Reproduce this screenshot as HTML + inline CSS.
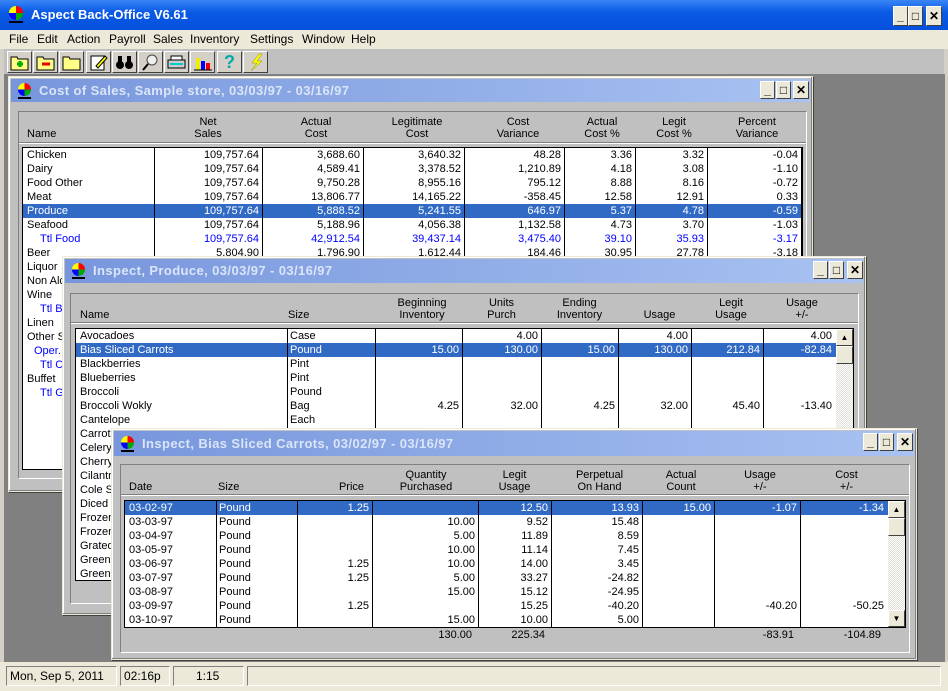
<!DOCTYPE html>
<html><head><meta charset="utf-8"><style>
*{margin:0;padding:0;box-sizing:border-box}
body{width:948px;height:691px;overflow:hidden;background:#d4d0c8;font-family:"Liberation Sans",sans-serif;font-size:11px;color:#000;position:relative}
.abs{position:absolute}
.mt{left:0;top:0;width:948px;height:30px;background:linear-gradient(#3a86f5,#0a5ae6 40%,#0550dc);color:#fff;font-weight:bold;font-size:13px}
.menu{left:0;top:30px;width:948px;height:19px;background:#ece9d8;font-size:12px}
.menu span{position:absolute;top:2px}
.tb{left:4px;top:49px;width:940px;height:25px;background:#c0c0c0}
.tbtn{position:absolute;top:2px;width:25px;height:22px;background:#d4d0c8;border:1px solid;border-color:#fff #404040 #404040 #fff}
.mdi{left:4px;top:74px;width:941px;height:588px;background:#808080}
.cb{position:absolute;width:15px;height:18px;background:#ece9d8;border:1px solid;border-color:#fff #404040 #404040 #fff;font-weight:bold;font-size:12px;text-align:center;line-height:16px;color:#000}
.win{position:absolute;background:#c0c0c0;border:1px solid #ece9d8;box-shadow:inset -1px -1px #808080,inset 1px 1px #fff,1px 1px 0 #404040}
.tt{position:absolute;left:2px;top:2px;height:23px;background:linear-gradient(90deg,#7896dc,#a8c2f2);color:#dbe5f8;font-weight:bold;font-size:13px;letter-spacing:.4px;line-height:23px}
.panel{position:absolute;border:1px solid;border-color:#808080 #fff #fff #808080;background:#c0c0c0}
.hl{position:absolute;height:2px;border-top:1px solid #808080;border-bottom:1px solid #fff}
.hd{position:absolute;font-size:11px;line-height:12px;text-align:center}
.grid{position:absolute;border:1px solid #000;background:#fff;overflow:hidden}
.grid table{border-collapse:collapse;table-layout:fixed;position:relative;z-index:1}
.grid td{height:14px;line-height:14px;white-space:nowrap;overflow:hidden;padding:0 4px;text-align:right}
.grid td.l{text-align:left}
.vl{position:absolute;top:0;bottom:0;width:1px;background:#000;z-index:2}
tr.s td{background:#316ac5;color:#fff}
.b{color:#0000ff}
.sb{position:absolute;top:0;right:0;width:17px;bottom:0;background:repeating-conic-gradient(#fff 0 25%,#e0ded6 0 50%) 0 0/2px 2px;z-index:3}
.sbb{position:absolute;left:0;width:17px;height:17px;background:#ece9d8;border:1px solid;border-color:#fff #404040 #404040 #fff;font-size:8px;text-align:center;line-height:15px}
.st{left:0;top:662px;width:948px;height:29px;background:#ece9d8}
.sp{position:absolute;top:4px;height:20px;border:1px solid;border-color:#808080 #fff #fff #808080;font-size:12px;line-height:18px;padding-left:3px}
</style></head><body>

<div class="abs mt"><div class="abs" style="left:9px;top:6px;width:14px;height:14px;border-radius:7px;background:conic-gradient(#f00 0 25%,#0a0 0 50%,#00f 0 75%,#ff0 0)"></div><div class="abs" style="left:9px;top:21px;width:14px;height:2px;background:#000"></div><span class="abs" style="left:31px;top:7px">Aspect Back-Office V6.61</span>
<div class="cb" style="left:893px;top:6px;width:15px;height:20px;line-height:18px">_</div><div class="cb" style="left:908px;top:6px;width:15px;height:20px;line-height:18px">□</div><div class="cb" style="left:926px;top:6px;width:16px;height:20px;line-height:18px">✕</div></div>

<div class="abs menu"><span style="left:9px">File</span><span style="left:37px">Edit</span><span style="left:67px">Action</span><span style="left:109px">Payroll</span><span style="left:153px">Sales</span><span style="left:190px">Inventory</span><span style="left:250px">Settings</span><span style="left:302px">Window</span><span style="left:351px">Help</span></div>

<div class="abs tb">
<div class="tbtn" style="left:3px"><svg width="23" height="20"><path d="M3 5h6l1 2h10v11H3z" fill="#ff8" stroke="#000"/><path d="M9 12h6M12 9v6" stroke="#0a0" stroke-width="3"/></svg></div>
<div class="tbtn" style="left:29px"><svg width="23" height="20"><path d="M3 5h6l1 2h10v11H3z" fill="#ff8" stroke="#000"/><path d="M8 12h8" stroke="#e00" stroke-width="3"/></svg></div>
<div class="tbtn" style="left:55px"><svg width="23" height="20"><path d="M3 5h6l1 2h10v11H3z" fill="#ff8" stroke="#000"/></svg></div>
<div class="tbtn" style="left:82px"><svg width="23" height="20"><rect x="4" y="4" width="13" height="14" fill="#fff" stroke="#000"/><path d="M9 14l9-10 2 2-9 10z" fill="#ff0" stroke="#000"/></svg></div>
<div class="tbtn" style="left:108px"><svg width="23" height="20"><circle cx="7" cy="13" r="4" fill="#000"/><circle cx="16" cy="13" r="4" fill="#000"/><rect x="5" y="4" width="4" height="8" fill="#000"/><rect x="14" y="4" width="4" height="8" fill="#000"/></svg></div>
<div class="tbtn" style="left:134px"><svg width="23" height="20"><circle cx="13" cy="8" r="5" fill="#eee" stroke="#444"/><path d="M9 12l-5 6" stroke="#000" stroke-width="2"/></svg></div>
<div class="tbtn" style="left:160px"><svg width="23" height="20"><rect x="3" y="8" width="17" height="8" fill="#ccc" stroke="#000"/><rect x="6" y="4" width="11" height="4" fill="#fff" stroke="#000"/><rect x="5" y="11" width="13" height="2" fill="#0cc"/></svg></div>
<div class="tbtn" style="left:186px"><svg width="23" height="20"><rect x="5" y="6" width="4" height="12" fill="#ee0"/><rect x="10" y="9" width="4" height="9" fill="#00f"/><rect x="15" y="11" width="4" height="7" fill="#e00"/><path d="M3 18h18" stroke="#000"/></svg></div>
<div class="tbtn" style="left:213px;font:bold 18px 'Liberation Sans';color:#0aa;text-align:center;line-height:20px">?</div>
<div class="tbtn" style="left:239px"><svg width="23" height="20"><path d="M15 2l-7 9h5l-6 8 11-10h-5l5-7z" fill="#ff0" stroke="#880" stroke-width=".5"/></svg></div>
</div>

<div class="abs mdi"></div>

<!-- Window 1 -->
<div class="win" style="left:8px;top:76px;width:805px;height:416px;z-index:1">
<div class="tt" style="width:799px"><div class="abs" style="left:7px;top:4px;width:13px;height:13px;border-radius:7px;background:conic-gradient(#f00 0 25%,#0a0 0 50%,#00f 0 75%,#ff0 0)"></div><div class="abs" style="left:7px;top:18px;width:13px;height:2px;background:#000"></div><span class="abs" style="left:28px">Cost of Sales, Sample store, 03/03/97 - 03/16/97</span></div>
<div class="cb" style="left:751px;top:4px">_</div><div class="cb" style="left:767px;top:4px">□</div><div class="cb" style="left:784px;top:4px;width:16px">✕</div>
<div class="panel" style="left:9px;top:34px;width:789px;height:368px"></div>
<div class="hl" style="left:10px;top:65px;width:787px"></div>
<div class="hd" style="left:18px;top:51px;text-align:left">Name</div>
<div class="hd" style="left:145px;top:39px;width:108px">Net<br>Sales</div>
<div class="hd" style="left:253px;top:39px;width:108px">Actual<br>Cost</div>
<div class="hd" style="left:354px;top:39px;width:108px">Legitimate<br>Cost</div>
<div class="hd" style="left:455px;top:39px;width:108px">Cost<br>Variance</div>
<div class="hd" style="left:555px;top:39px;width:76px">Actual<br>Cost %</div>
<div class="hd" style="left:626px;top:39px;width:78px">Legit<br>Cost %</div>
<div class="hd" style="left:698px;top:39px;width:100px">Percent<br>Variance</div>
<div class="grid" style="left:13px;top:70px;width:781px;height:323px">
<div class="vl" style="left:131px"></div><div class="vl" style="left:239px"></div><div class="vl" style="left:340px"></div><div class="vl" style="left:441px"></div><div class="vl" style="left:541px"></div><div class="vl" style="left:612px"></div><div class="vl" style="left:684px"></div><div class="vl" style="left:778px"></div>
<table style="width:779px"><colgroup><col style="width:132px"><col style="width:108px"><col style="width:101px"><col style="width:101px"><col style="width:100px"><col style="width:71px"><col style="width:72px"><col style="width:94px"></colgroup>
<tr><td class="l">Chicken</td><td>109,757.64</td><td>3,688.60</td><td>3,640.32</td><td>48.28</td><td>3.36</td><td>3.32</td><td>-0.04</td></tr>
<tr><td class="l">Dairy</td><td>109,757.64</td><td>4,589.41</td><td>3,378.52</td><td>1,210.89</td><td>4.18</td><td>3.08</td><td>-1.10</td></tr>
<tr><td class="l">Food Other</td><td>109,757.64</td><td>9,750.28</td><td>8,955.16</td><td>795.12</td><td>8.88</td><td>8.16</td><td>-0.72</td></tr>
<tr><td class="l">Meat</td><td>109,757.64</td><td>13,806.77</td><td>14,165.22</td><td>-358.45</td><td>12.58</td><td>12.91</td><td>0.33</td></tr>
<tr class="s"><td class="l">Produce</td><td>109,757.64</td><td>5,888.52</td><td>5,241.55</td><td>646.97</td><td>5.37</td><td>4.78</td><td>-0.59</td></tr>
<tr><td class="l">Seafood</td><td>109,757.64</td><td>5,188.96</td><td>4,056.38</td><td>1,132.58</td><td>4.73</td><td>3.70</td><td>-1.03</td></tr>
<tr class="b"><td class="l" style="padding-left:17px">Ttl Food</td><td>109,757.64</td><td>42,912.54</td><td>39,437.14</td><td>3,475.40</td><td>39.10</td><td>35.93</td><td>-3.17</td></tr>
<tr><td class="l">Beer</td><td>5,804.90</td><td>1,796.90</td><td>1,612.44</td><td>184.46</td><td>30.95</td><td>27.78</td><td>-3.18</td></tr>
<tr><td class="l">Liquor</td><td></td><td></td><td></td><td></td><td></td><td></td><td></td></tr>
<tr><td class="l">Non Alcoholic</td><td></td><td></td><td></td><td></td><td></td><td></td><td></td></tr>
<tr><td class="l">Wine</td><td></td><td></td><td></td><td></td><td></td><td></td><td></td></tr>
<tr class="b"><td class="l" style="padding-left:17px">Ttl Beverage</td><td></td><td></td><td></td><td></td><td></td><td></td><td></td></tr>
<tr><td class="l">Linen</td><td></td><td></td><td></td><td></td><td></td><td></td><td></td></tr>
<tr><td class="l">Other Supplies</td><td></td><td></td><td></td><td></td><td></td><td></td><td></td></tr>
<tr class="b"><td class="l" style="padding-left:11px">Oper. Supplies</td><td></td><td></td><td></td><td></td><td></td><td></td><td></td></tr>
<tr class="b"><td class="l" style="padding-left:17px">Ttl Cost</td><td></td><td></td><td></td><td></td><td></td><td></td><td></td></tr>
<tr><td class="l">Buffet</td><td></td><td></td><td></td><td></td><td></td><td></td><td></td></tr>
<tr class="b"><td class="l" style="padding-left:17px">Ttl Gross</td><td></td><td></td><td></td><td></td><td></td><td></td><td></td></tr>
</table></div>
</div>

<!-- Window 2 -->
<div class="win" style="left:62px;top:256px;width:804px;height:359px;z-index:2">
<div class="tt" style="width:798px;height:24px;line-height:24px"><div class="abs" style="left:7px;top:4px;width:13px;height:13px;border-radius:7px;background:conic-gradient(#f00 0 25%,#0a0 0 50%,#00f 0 75%,#ff0 0)"></div><div class="abs" style="left:7px;top:18px;width:13px;height:2px;background:#000"></div><span class="abs" style="left:28px">Inspect, Produce, 03/03/97 - 03/16/97</span></div>
<div class="cb" style="left:750px;top:4px">_</div><div class="cb" style="left:766px;top:4px">□</div><div class="cb" style="left:784px;top:4px;width:16px">✕</div>
<div class="panel" style="left:7px;top:36px;width:789px;height:311px"></div>
<div class="hl" style="left:8px;top:65px;width:787px"></div>
<div class="hd" style="left:17px;top:52px;text-align:left">Name</div>
<div class="hd" style="left:225px;top:52px;text-align:left">Size</div>
<div class="hd" style="left:311px;top:40px;width:96px">Beginning<br>Inventory</div>
<div class="hd" style="left:399px;top:40px;width:79px">Units<br>Purch</div>
<div class="hd" style="left:478px;top:40px;width:77px">Ending<br>Inventory</div>
<div class="hd" style="left:560px;top:52px;width:73px">Usage</div>
<div class="hd" style="left:628px;top:40px;width:80px">Legit<br>Usage</div>
<div class="hd" style="left:700px;top:40px;width:78px">Usage<br>+/-</div>
<div class="grid" style="left:12px;top:71px;width:779px;height:253px">
<div class="vl" style="left:211px"></div><div class="vl" style="left:299px"></div><div class="vl" style="left:386px"></div><div class="vl" style="left:465px"></div><div class="vl" style="left:542px"></div><div class="vl" style="left:615px"></div><div class="vl" style="left:687px"></div>
<div class="sb"><div class="sbb" style="top:0">▲</div><div class="sbb" style="top:17px;height:18px"></div></div>
<table style="width:760px"><colgroup><col style="width:212px"><col style="width:88px"><col style="width:87px"><col style="width:79px"><col style="width:77px"><col style="width:73px"><col style="width:72px"><col style="width:72px"></colgroup>
<tr><td class="l">Avocadoes</td><td class="l" style="padding-left:2px">Case</td><td></td><td>4.00</td><td></td><td>4.00</td><td></td><td>4.00</td></tr>
<tr class="s"><td class="l">Bias Sliced Carrots</td><td class="l" style="padding-left:2px">Pound</td><td>15.00</td><td>130.00</td><td>15.00</td><td>130.00</td><td>212.84</td><td>-82.84</td></tr>
<tr><td class="l">Blackberries</td><td class="l" style="padding-left:2px">Pint</td><td></td><td></td><td></td><td></td><td></td><td></td></tr>
<tr><td class="l">Blueberries</td><td class="l" style="padding-left:2px">Pint</td><td></td><td></td><td></td><td></td><td></td><td></td></tr>
<tr><td class="l">Broccoli</td><td class="l" style="padding-left:2px">Pound</td><td></td><td></td><td></td><td></td><td></td><td></td></tr>
<tr><td class="l">Broccoli Wokly</td><td class="l" style="padding-left:2px">Bag</td><td>4.25</td><td>32.00</td><td>4.25</td><td>32.00</td><td>45.40</td><td>-13.40</td></tr>
<tr><td class="l">Cantelope</td><td class="l" style="padding-left:2px">Each</td><td></td><td></td><td></td><td></td><td></td><td></td></tr>
<tr><td class="l">Carrots</td><td></td><td></td><td></td><td></td><td></td><td></td><td></td></tr>
<tr><td class="l">Celery</td><td></td><td></td><td></td><td></td><td></td><td></td><td></td></tr>
<tr><td class="l">Cherry Tomatoes</td><td></td><td></td><td></td><td></td><td></td><td></td><td></td></tr>
<tr><td class="l">Cilantro</td><td></td><td></td><td></td><td></td><td></td><td></td><td></td></tr>
<tr><td class="l">Cole Slaw</td><td></td><td></td><td></td><td></td><td></td><td></td><td></td></tr>
<tr><td class="l">Diced Onions</td><td></td><td></td><td></td><td></td><td></td><td></td><td></td></tr>
<tr><td class="l">Frozen Corn</td><td></td><td></td><td></td><td></td><td></td><td></td><td></td></tr>
<tr><td class="l">Frozen Peas</td><td></td><td></td><td></td><td></td><td></td><td></td><td></td></tr>
<tr><td class="l">Grated Carrots</td><td></td><td></td><td></td><td></td><td></td><td></td><td></td></tr>
<tr><td class="l">Green Beans</td><td></td><td></td><td></td><td></td><td></td><td></td><td></td></tr>
<tr><td class="l">Green Peppers</td><td></td><td></td><td></td><td></td><td></td><td></td><td></td></tr>
</table></div>
</div>

<!-- Window 3 -->
<div class="win" style="left:111px;top:428px;width:806px;height:232px;z-index:3">
<div class="tt" style="width:800px;height:25px;line-height:25px"><div class="abs" style="left:7px;top:5px;width:13px;height:13px;border-radius:7px;background:conic-gradient(#f00 0 25%,#0a0 0 50%,#00f 0 75%,#ff0 0)"></div><div class="abs" style="left:7px;top:19px;width:13px;height:2px;background:#000"></div><span class="abs" style="left:28px">Inspect, Bias Sliced Carrots, 03/02/97 - 03/16/97</span></div>
<div class="cb" style="left:751px;top:4px">_</div><div class="cb" style="left:767px;top:4px">□</div><div class="cb" style="left:785px;top:4px;width:16px">✕</div>
<div class="panel" style="left:8px;top:35px;width:790px;height:189px"></div>
<div class="hl" style="left:9px;top:65px;width:788px"></div>
<div class="hd" style="left:17px;top:52px;text-align:left">Date</div>
<div class="hd" style="left:106px;top:52px;text-align:left">Size</div>
<div class="hd" style="left:185px;top:52px;width:75px;text-align:right;padding-right:8px">Price</div>
<div class="hd" style="left:261px;top:40px;width:106px">Quantity<br>Purchased</div>
<div class="hd" style="left:366px;top:40px;width:73px">Legit<br>Usage</div>
<div class="hd" style="left:442px;top:40px;width:91px">Perpetual<br>On Hand</div>
<div class="hd" style="left:533px;top:40px;width:72px">Actual<br>Count</div>
<div class="hd" style="left:605px;top:40px;width:86px">Usage<br>+/-</div>
<div class="hd" style="left:691px;top:40px;width:87px">Cost<br>+/-</div>
<div class="grid" style="left:12px;top:71px;width:782px;height:128px">
<div class="vl" style="left:91px"></div><div class="vl" style="left:172px"></div><div class="vl" style="left:247px"></div><div class="vl" style="left:353px"></div><div class="vl" style="left:426px"></div><div class="vl" style="left:517px"></div><div class="vl" style="left:589px"></div><div class="vl" style="left:675px"></div>
<div class="sb"><div class="sbb" style="top:0">▲</div><div class="sbb" style="top:17px;height:18px"></div><div class="sbb" style="bottom:0">▼</div></div>
<table style="width:763px"><colgroup><col style="width:92px"><col style="width:81px"><col style="width:75px"><col style="width:106px"><col style="width:73px"><col style="width:91px"><col style="width:72px"><col style="width:86px"><col style="width:87px"></colgroup>
<tr class="s"><td class="l">03-02-97</td><td class="l" style="padding-left:2px">Pound</td><td>1.25</td><td></td><td>12.50</td><td>13.93</td><td>15.00</td><td>-1.07</td><td>-1.34</td></tr>
<tr><td class="l">03-03-97</td><td class="l" style="padding-left:2px">Pound</td><td></td><td>10.00</td><td>9.52</td><td>15.48</td><td></td><td></td><td></td></tr>
<tr><td class="l">03-04-97</td><td class="l" style="padding-left:2px">Pound</td><td></td><td>5.00</td><td>11.89</td><td>8.59</td><td></td><td></td><td></td></tr>
<tr><td class="l">03-05-97</td><td class="l" style="padding-left:2px">Pound</td><td></td><td>10.00</td><td>11.14</td><td>7.45</td><td></td><td></td><td></td></tr>
<tr><td class="l">03-06-97</td><td class="l" style="padding-left:2px">Pound</td><td>1.25</td><td>10.00</td><td>14.00</td><td>3.45</td><td></td><td></td><td></td></tr>
<tr><td class="l">03-07-97</td><td class="l" style="padding-left:2px">Pound</td><td>1.25</td><td>5.00</td><td>33.27</td><td>-24.82</td><td></td><td></td><td></td></tr>
<tr><td class="l">03-08-97</td><td class="l" style="padding-left:2px">Pound</td><td></td><td>15.00</td><td>15.12</td><td>-24.95</td><td></td><td></td><td></td></tr>
<tr><td class="l">03-09-97</td><td class="l" style="padding-left:2px">Pound</td><td>1.25</td><td></td><td>15.25</td><td>-40.20</td><td></td><td>-40.20</td><td>-50.25</td></tr>
<tr><td class="l">03-10-97</td><td class="l" style="padding-left:2px">Pound</td><td></td><td>15.00</td><td>10.00</td><td>5.00</td><td></td><td></td><td></td></tr>
</table></div>
<div class="hd" style="left:260px;top:200px;width:100px;text-align:right">130.00</div>
<div class="hd" style="left:335px;top:200px;width:98px;text-align:right">225.34</div>
<div class="hd" style="left:580px;top:200px;width:102px;text-align:right">-83.91</div>
<div class="hd" style="left:669px;top:200px;width:100px;text-align:right">-104.89</div>
</div>

<div class="abs st">
<div class="sp" style="left:6px;width:111px">Mon, Sep 5, 2011</div>
<div class="sp" style="left:120px;width:50px">02:16p</div>
<div class="sp" style="left:173px;width:71px;padding-left:22px">1:15</div>
<div class="sp" style="left:247px;width:694px"></div>
</div>
</body></html>
